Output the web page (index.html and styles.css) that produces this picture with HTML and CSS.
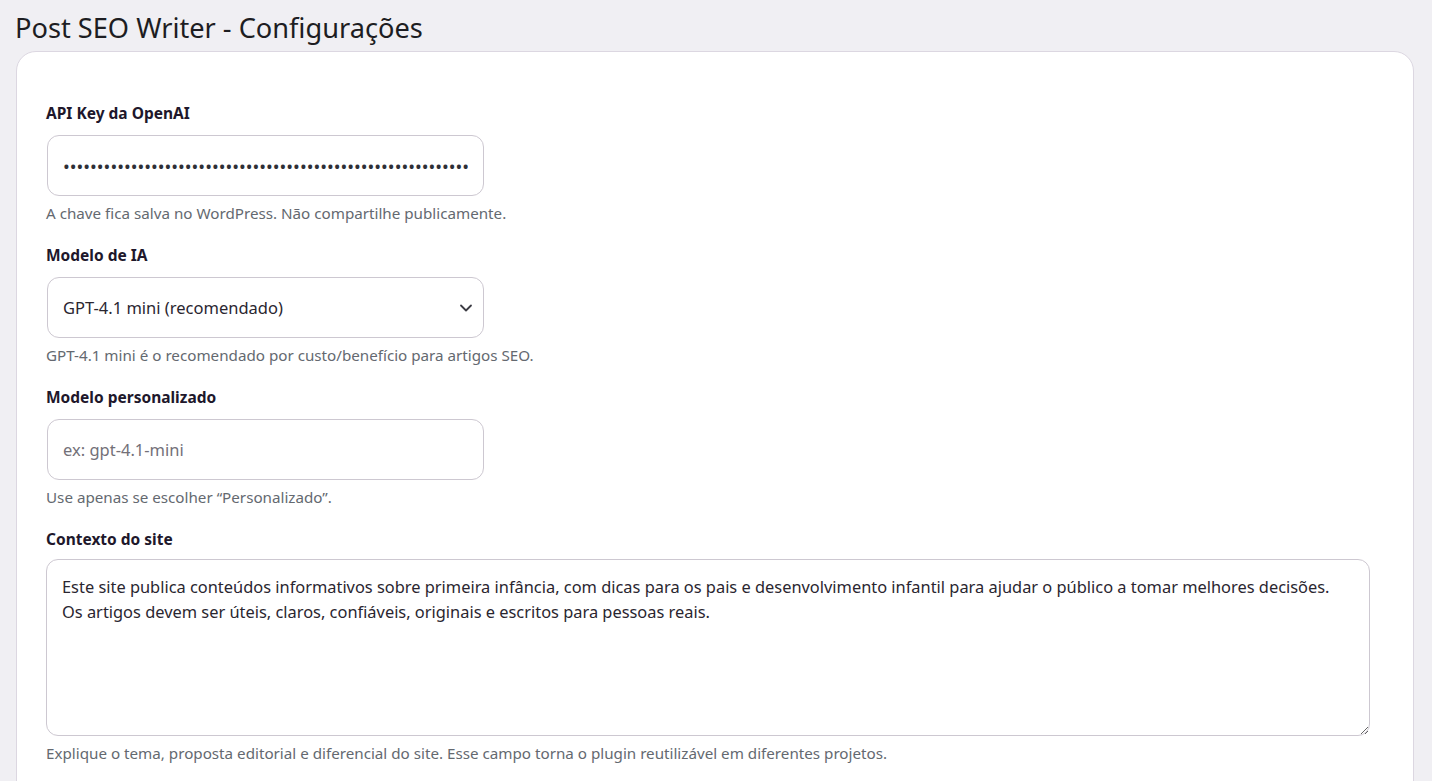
FILE: index.html
```html
<!DOCTYPE html>
<html lang="pt-BR">

<head>
    <meta charset="UTF-8">
    <meta name="viewport" content="width=device-width, initial-scale=1.0">
    <title>Post SEO Writer - Configurações</title>
    <link rel="stylesheet" href="styles.css">
</head>

<body>
    <div class="wrap">
        <h1 class="page-title">Post SEO Writer - Configurações</h1>

        <form class="settings-card">
            <div class="field">
                <label class="field-label" for="api_key">API Key da OpenAI</label>
                <input class="field-input field-password" type="password" id="api_key" value="sk-proj-0000000000000000000000000000000000000000000000000000">
                <p class="field-help">A chave fica salva no WordPress. Não compartilhe publicamente.</p>
            </div>

            <div class="field">
                <label class="field-label" for="model">Modelo de IA</label>
                <div class="select-wrap">
                    <select class="field-input field-select" id="model">
                        <option selected>GPT-4.1 mini (recomendado)</option>
                        <option>GPT-4.1</option>
                        <option>Personalizado</option>
                    </select>
                    <svg class="select-arrow" width="14" height="14" viewBox="0 0 14 14">
                        <path d="M2 4.5 L7 9.5 L12 4.5" fill="none" stroke="#3c3c44" stroke-width="1.8" stroke-linecap="round" stroke-linejoin="round" />
                    </svg>
                </div>
                <p class="field-help">GPT-4.1 mini é o recomendado por custo/benefício para artigos SEO.</p>
            </div>

            <div class="field">
                <label class="field-label" for="custom_model">Modelo personalizado</label>
                <input class="field-input" type="text" id="custom_model" placeholder="ex: gpt-4.1-mini">
                <p class="field-help">Use apenas se escolher “Personalizado”.</p>
            </div>

            <div class="field">
                <label class="field-label" for="site_context">Contexto do site</label>
                <textarea class="field-textarea" id="site_context">Este site publica conteúdos informativos sobre primeira infância, com dicas para os pais e desenvolvimento infantil para ajudar o público a tomar melhores decisões.
Os artigos devem ser úteis, claros, confiáveis, originais e escritos para pessoas reais.</textarea>
                <p class="field-help">Explique o tema, proposta editorial e diferencial do site. Esse campo torna o plugin reutilizável em diferentes projetos.</p>
            </div>
        </form>
    </div>
</body>

</html>
```

FILE: styles.css
```css
body {
    margin: 0;
    padding: 0;
    background-color: #f0eff3;
    font-family: "Noto Sans", "Open Sans", sans-serif;
    color: #1e1a26;
    overflow: hidden;
}

.wrap {
    padding: 0 18px 0 15px;
}

.page-title {
    margin: 0;
    padding-top: 9px;
    font-size: 27.2px;
    font-weight: 400;
    line-height: 38px;
    height: 42px;
    color: #1d1d22;
}

.settings-card {
    margin-left: 1px;
    background-color: #fff;
    border: 1px solid #dcd7e1;
    border-radius: 20px;
    padding: 51px 29px 40px;
    min-height: 760px;
}

.field {
    display: flex;
    flex-direction: column;
    align-items: flex-start;
    margin-bottom: 22px;
}

.field-label {
    font-size: 15.5px;
    font-weight: 700;
    line-height: 20px;
    margin-bottom: 12px;
    color: #20172b;
}

.field-input {
    box-sizing: border-box;
    width: 437px;
    height: 61px;
    margin: 0 0 0 1px;
    padding: 0 15px;
    border: 1px solid #cdc8d1;
    border-radius: 12px;
    background-color: #fff;
    font-family: inherit;
    font-size: 16.5px;
    color: #2a2630;
    outline: none;
}

.field-input::placeholder {
    color: #737078;
}

.field-password {
    font-size: 18px;
    letter-spacing: 0;
    color: #2e2f36;
}

.select-wrap {
    position: relative;
}

.field-select {
    appearance: none;
    -webkit-appearance: none;
    cursor: pointer;
}

.select-arrow {
    position: absolute;
    right: 11px;
    top: 24px;
    pointer-events: none;
}

.field-textarea {
    box-sizing: border-box;
    width: 1324px;
    height: 177px;
    margin-top: -2px;
    padding: 14px 15px;
    border: 1px solid #cdc8d1;
    border-radius: 12px;
    font-family: inherit;
    font-size: 16.4px;
    line-height: 25px;
    color: #2a2630;
    outline: none;
}

.field-help {
    margin: 7px 0 0;
    font-size: 15.2px;
    line-height: 20px;
    color: #646970;
}
```
